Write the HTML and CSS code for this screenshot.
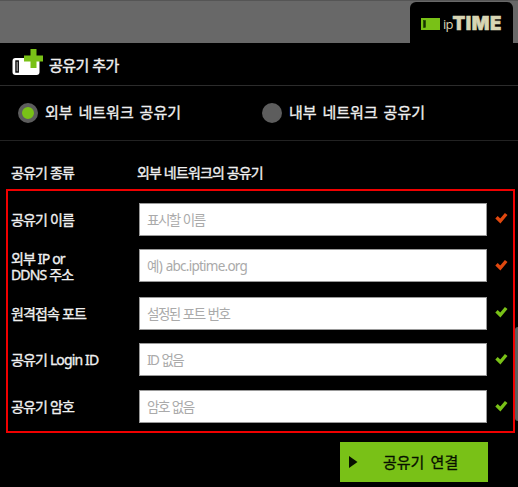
FILE: index.html
```
<!DOCTYPE html>
<html lang="ko">
<head>
<meta charset="utf-8">
<title>ipTIME</title>
<link rel="stylesheet" href="styles.css">
</head>
<body>
<div class="topbar">
  <div class="brand">
    <svg class="brand-icon" width="19" height="12" viewBox="0 0 19 12"><rect width="19" height="12" fill="#79c117"/><rect x="2.5" y="2.5" width="2" height="7" fill="#143000" stroke="#143000" stroke-width=".5"/></svg>
    <span class="brand-ip">ip</span><span class="brand-time">TIME</span>
  </div>
</div>
<header class="header">
  <svg class="add-icon" width="31" height="27" viewBox="0 0 31 27"><rect x="0.5" y="9" width="27" height="17" rx="3" fill="#fff"/><rect x="4" y="12" width="2.2" height="11" fill="#fff" stroke="#000" stroke-width="1.4"/><path d="M18.500 0h6v6.500h6.500v6h-6.500v6.500h-6v-6.500H12v-6h6.500z" fill="#79c117"/></svg>
  <h1 class="title">공유기 추가</h1>
</header>
<div class="radios">
  <div class="radio"><span class="dot on"></span><span class="radio-text">외부 네트워크 공유기</span></div>
  <div class="radio"><span class="dot"></span><span class="radio-text">내부 네트워크 공유기</span></div>
</div>
<main class="form">
  <div class="kind"><span class="label">공유기 종류</span><span class="label value">외부 네트워크의 공유기</span></div>
  <div class="fields">
    <div class="row"><label class="label">공유기 이름</label><input class="field" placeholder="표시할 이름"><svg class="check bad" width="13" height="12" viewBox="0 0 13 12"><path d="M1.500 5.200L5.300 9L11.200 2"/></svg></div>
    <div class="row"><label class="label double">외부 IP or<br>DDNS 주소</label><input class="field latin" placeholder="예) abc.iptime.org"><svg class="check bad low" width="13" height="12" viewBox="0 0 13 12"><path d="M1.500 5.200L5.300 9L11.200 2"/></svg></div>
    <div class="row"><label class="label">원격접속 포트</label><input class="field" placeholder="설정된 포트 번호"><svg class="check" width="13" height="12" viewBox="0 0 13 12"><path d="M1.500 5.200L5.300 9L11.200 2"/></svg></div>
    <div class="row"><label class="label">공유기 Login ID</label><input class="field" placeholder="ID 없음"><svg class="check low" width="13" height="12" viewBox="0 0 13 12"><path d="M1.500 5.200L5.300 9L11.200 2"/></svg></div>
    <div class="row"><label class="label">공유기 암호</label><input class="field" placeholder="암호 없음"><svg class="check low" width="13" height="12" viewBox="0 0 13 12"><path d="M1.500 5.200L5.300 9L11.200 2"/></svg></div>
  </div>
  <button class="connect"><svg width="9" height="12" viewBox="0 0 9 12"><path d="M0 0l8.500 6L0 12z" fill="#071000"/></svg><span class="connect-text">공유기 연결</span></button>
</main>
<div class="scroll"></div>
</body>
</html>
```
FILE: styles.css
```
* { box-sizing: border-box; }
body {
  margin: 0;
  height: 487px;
  overflow: hidden;
  position: relative;
  background: #000;
  color: #f0f0f0;
  font-family: "Noto Sans", "Noto Sans CJK KR", sans-serif;
}
.topbar {
  height: 43px;
  background: #686868;
  border-top: 1px solid #555;
  display: flex;
  justify-content: flex-end;
  padding: 1px 5px 0 0;
}
.brand {
  width: 103px;
  background: #000;
  border-radius: 6px 6px 0 0;
  display: flex;
  align-items: center;
  padding-left: 11px;
  color: #d8d5b3;
  white-space: nowrap;
}
.brand-icon { margin-top: 2px; flex: none; }
.brand-ip {
  font: 13px/20px "Open Sans", sans-serif;
  letter-spacing: -0.9px;
  margin: 3px 0 0 3px;
}
.brand-time {
  font: 900 18.5px/20px Inter, sans-serif;
  letter-spacing: 0.6px;
  -webkit-text-stroke: 0.6px #d8d5b3;
}
.header {
  height: 43px;
  border-bottom: 1px solid #2c2c2c;
  display: flex;
  padding: 6px 0 0 12px;
}
.title {
  margin: 2px 0 0 6px;
  font-size: 15px;
  line-height: 28px;
  font-weight: 400;
  letter-spacing: -0.5px;
  -webkit-text-stroke: 0.4px #f0f0f0;
}
.radios {
  height: 55px;
  border-bottom: 1px solid #222;
  display: flex;
  padding-left: 18px;
}
.radio {
  width: 244px;
  height: 54px;
  display: flex;
  align-items: center;
  gap: 7px;
}
.dot {
  width: 20px;
  height: 20px;
  border-radius: 50%;
  background: #5d5d5d;
}
.dot.on { border: 4px solid #5d5d5d; background: #79c117; }
.radio-text {
  margin-top: -2px;
  font-size: 15px;
  line-height: 24px;
  word-spacing: 2px;
  -webkit-text-stroke: 0.3px #f0f0f0;
}
.form { padding: 0 3px 0 6px; }
.kind {
  height: 48px;
  display: flex;
  align-items: center;
  padding: 15px 0 0 5px;
}
.label {
  width: 128px;
  flex: none;
  font-size: 14px;
  line-height: 16px;
  letter-spacing: -0.85px;
  white-space: nowrap;
  -webkit-text-stroke: 0.35px #f0f0f0;
}
.double { padding-top: 2px; }
.value { margin-left: -2px; }
.fields {
  height: 244px;
  border: 2px solid #f00000;
  padding: 12px 0 0 3px;
}
.row {
  display: flex;
  align-items: center;
  height: 33px;
  margin-bottom: 13px;
}
.row:nth-child(2) { margin-bottom: 15px; }
.row:nth-child(4) { margin-bottom: 14px; }
.field {
  width: 348px;
  height: 33px;
  border: 1px solid #999;
  border-radius: 0;
  margin: 0;
  padding: 0 7px;
  background: #fff;
  font: 13.5px/18px "Noto Sans", "Noto Sans CJK KR", sans-serif;
  letter-spacing: -1.5px;
  word-spacing: 1px;
}
.field.latin { letter-spacing: -0.75px; }
.field::placeholder { color: #aaa; opacity: 1; }
.check {
  margin: -3px 0 0 8px;
  fill: none;
  stroke: #79c117;
  stroke-width: 3.4;
}
.check.low { margin-top: -1px; }
.check.bad { stroke: #e0480f; }
.connect {
  width: 148px;
  height: 40px;
  margin: 9px 0 0 334px;
  padding: 0 0 0 9px;
  border: 0;
  background: #79c117;
  display: flex;
  align-items: center;
}
.connect-text {
  margin-left: 25px;
  font: 400 15px/24px "Noto Sans CJK KR", sans-serif;
  word-spacing: 2px;
  color: #071000;
  white-space: nowrap;
  -webkit-text-stroke: 0.3px #071000;
}
.scroll {
  position: absolute;
  left: 515px;
  top: 327px;
  width: 7px;
  height: 94px;
  border-radius: 3px;
  background: #5d5d5d;
}
```
